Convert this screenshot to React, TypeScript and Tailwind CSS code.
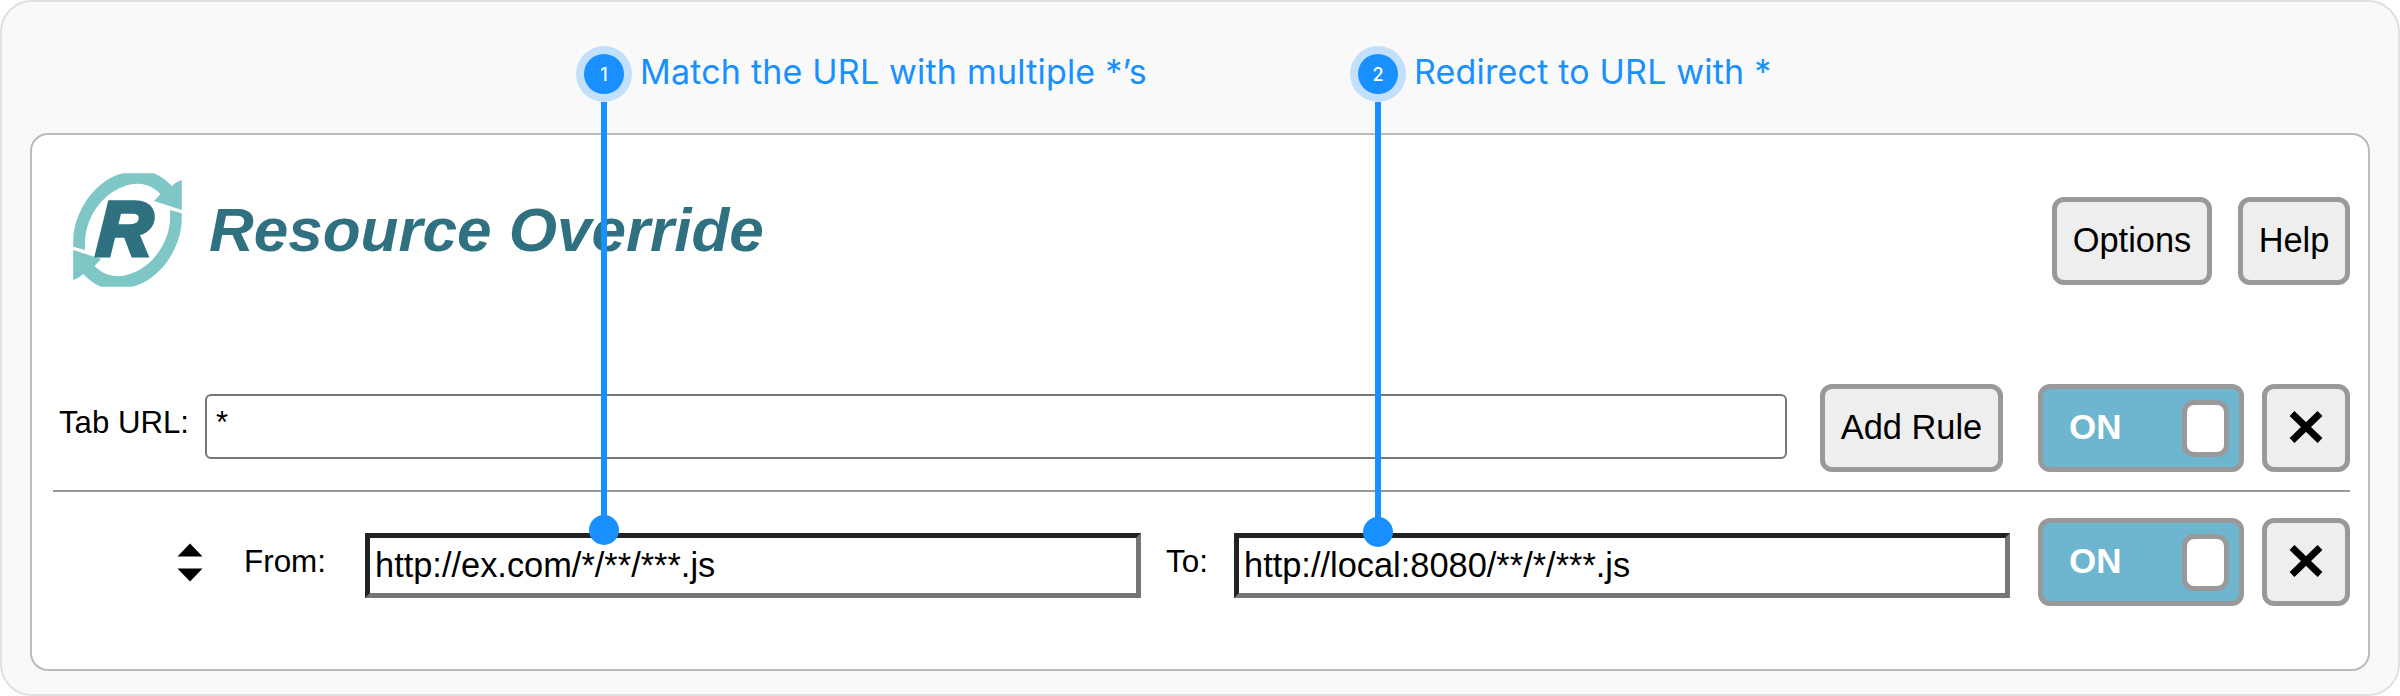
import type { ReactNode } from "react";

function Logo() {
  const arrow =
    "M0.3 74.7C0 64 1 55 4.3 47C8 36 15 24 24 16C32 8.5 41 3 50.3 1.2H81C88 4 94 9 98.7 14C102 11 105.5 9 108.8 8V38L81 29L87.5 22C83.5 18 79 15 73.7 13.2C66 11 58 11.5 50.3 14.7C41 18 33 24 27 31.3C21 38 17 46 14.3 54.7C12.3 62 11.5 70 12 78Z";
  return (
    <svg width="109" height="116" viewBox="0 0 109 116" className="shrink-0" aria-hidden="true">
      <path d={arrow} fill="#7fc6c6" />
      <path d={arrow} fill="#7fc6c6" transform="rotate(180 54.5 58)" />
      <text
        transform="translate(23 83.2) skewX(-3)"
        fontSize="76"
        fontWeight="700"
        fontStyle="italic"
        fontFamily="Liberation Sans, Arial, sans-serif"
        fill="#2f7180"
        stroke="#2f7180"
        strokeWidth="5"
      >
        R
      </text>
    </svg>
  );
}

function Button({ className, children }: { className: string; children: ReactNode }) {
  return (
    <button
      className={`flex h-[88px] shrink-0 items-center justify-center rounded-xl border-[5px] border-[#999] bg-[#eee] pb-[2px] text-[34.4px] leading-none whitespace-nowrap ${className}`}
    >
      {children}
    </button>
  );
}

function Toggle() {
  return (
    <div className="flex h-[88px] w-[206px] shrink-0 items-center justify-between rounded-xl border-[5px] border-[#999] bg-[#6eb5d0] pr-[10px] pl-[26px]">
      <span className="pb-[3px] text-[35px] leading-none font-bold text-white">ON</span>
      <span className="h-[57px] w-[47px] rounded-xl border-[5px] border-[#999] bg-white" />
    </div>
  );
}

function CloseButton() {
  return (
    <Button className="w-[88px]">
      <svg width="34" height="32" viewBox="0 0 34 32" aria-hidden="true">
        <path d="M3 2.5L31 29.5M31 2.5L3 29.5" stroke="#000" strokeWidth="7" />
      </svg>
    </Button>
  );
}

function RuleInput({ value }: { value: string }) {
  return (
    <div className="flex h-[65px] w-[776px] shrink-0 items-center border-[5px] border-t-[#222] border-r-[#767676] border-b-[#767676] border-l-[#222] bg-white pl-[5px] text-[34.4px] leading-none">
      {value}
    </div>
  );
}

function Marker({ label, step, className, lineClass }: { label: string; step: number; className: string; lineClass: string }) {
  return (
    <div className={`absolute top-[44px] flex flex-col ${className}`}>
      <div className="flex h-14 items-center gap-2">
        <span className="flex size-14 shrink-0 items-center justify-center rounded-full bg-[#c2dffc]">
          <span className="flex size-10 items-center justify-center rounded-full bg-[#1890ff] text-[18px] font-medium text-white">{step}</span>
        </span>
        <span className="pb-1 text-[34px] leading-none tracking-[0.2px] whitespace-nowrap text-[#1890ff]">{label}</span>
      </div>
      <div className="flex w-14 flex-col items-center">
        <span className={`w-[6px] bg-[#1890ff] ${lineClass}`} />
        <span className="-mt-[15px] size-[30px] rounded-full bg-[#1890ff]" />
      </div>
    </div>
  );
}

export default function App() {
  return (
    <div className="relative h-[696px] w-[2400px] rounded-[32px] border-2 border-[#e0e0e0] bg-[#f9f9f9] px-7 pt-[131px] font-['Liberation_Sans',Arial,sans-serif] text-black">
      <main className="h-[538px] w-[2340px] rounded-[18px] border-2 border-[#bbb] bg-white pr-[18px] pl-[21px]">
        <header className="flex h-[249px] items-start pt-[37px] pl-5">
          <Logo />
          <h1 className="mt-[22px] ml-[27px] text-[62px] leading-[72px] font-bold text-[#2f7180] italic">Resource Override</h1>
          <div className="mt-[25px] ml-auto flex gap-[26px]">
            <Button className="w-[160px]">Options</Button>
            <Button className="w-[112px]">Help</Button>
          </div>
        </header>
        <section className="flex h-[108px] items-start border-b-[2px] border-[#999]">
          <label className="mt-[21px] ml-[6px] w-[146px] shrink-0 text-[31.2px] leading-[36px]">Tab URL:</label>
          <div className="mt-[10px] h-[65px] w-[1582px] rounded-[6px] border-2 border-[#767676] bg-white pt-[9px] pl-[9px] text-[31px] leading-[36px]">*</div>
          <div className="ml-auto flex">
            <Button className="w-[183px]">Add Rule</Button>
            <div className="ml-[35px] flex gap-[18px]">
              <Toggle />
              <CloseButton />
            </div>
          </div>
        </section>
        <section className="flex h-[114px] items-end">
          <svg width="26" height="39" viewBox="0 0 26 39" className="mb-[24px] ml-[124px] shrink-0" aria-hidden="true">
            <path d="M0.5 13.5L13 0.5L25.5 13.5ZM0.5 25.5L13 38.5L25.5 25.5Z" />
          </svg>
          <span className="mb-[26px] ml-[41px] w-[121px] shrink-0 text-[31.4px] leading-[36px]">From:</span>
          <div className="mb-2">
            <RuleInput value="http://ex.com/*/**/***.js" />
          </div>
          <span className="mb-[26px] ml-[25px] w-[68px] shrink-0 text-[31.4px] leading-[36px]">To:</span>
          <div className="mb-2">
            <RuleInput value="http://local:8080/**/*/***.js" />
          </div>
          <div className="ml-auto flex gap-[18px]">
            <Toggle />
            <CloseButton />
          </div>
        </section>
      </main>
      <div className="font-['Inter',sans-serif]">
        <Marker step={1} label="Match the URL with multiple *’s" className="left-[574px]" lineClass="h-[428px]" />
        <Marker step={2} label="Redirect to URL with *" className="left-[1348px]" lineClass="h-[430px]" />
      </div>
    </div>
  );
}
